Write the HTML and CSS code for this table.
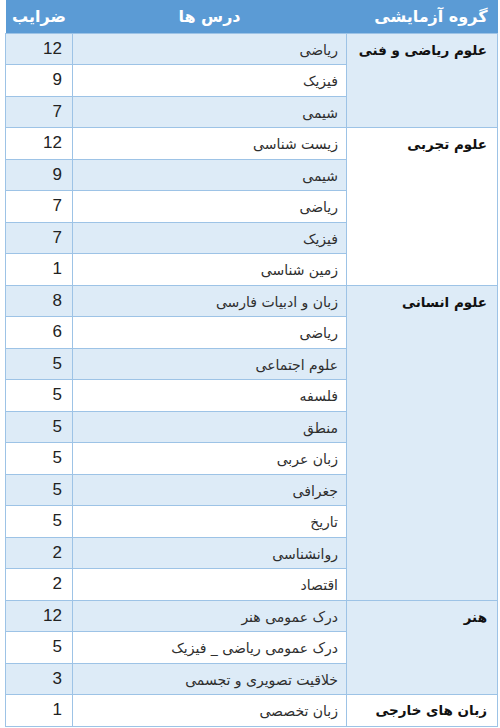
FILE: index.html
```html
<!DOCTYPE html>
<html lang="fa" dir="rtl">
<head>
<meta charset="utf-8">
<link rel="stylesheet" href="styles.css">
</head>
<body>
<table class="tbl">
  <colgroup><col class="c-group"><col class="c-lesson"><col class="c-num"></colgroup>
  <thead>
    <tr class="head"><th class="h-group">گروه آزمایشی</th><th class="h-lesson">درس ها</th><th class="h-num">ضرایب</th></tr>
  </thead>
  <tbody>
    <tr class="b"><td class="grp b" rowspan="3">علوم ریاضی و فنی</td><td class="les">ریاضی</td><td class="num">12</td></tr>
    <tr class="w"><td class="les">فیزیک</td><td class="num">9</td></tr>
    <tr class="b"><td class="les">شیمی</td><td class="num">7</td></tr>

    <tr class="w"><td class="grp w" rowspan="5">علوم تجربی</td><td class="les">زیست شناسی</td><td class="num">12</td></tr>
    <tr class="b"><td class="les">شیمی</td><td class="num">9</td></tr>
    <tr class="w"><td class="les">ریاضی</td><td class="num">7</td></tr>
    <tr class="b"><td class="les">فیزیک</td><td class="num">7</td></tr>
    <tr class="w"><td class="les">زمین شناسی</td><td class="num">1</td></tr>

    <tr class="b"><td class="grp b" rowspan="10">علوم انسانی</td><td class="les">زبان و ادبیات فارسی</td><td class="num">8</td></tr>
    <tr class="w"><td class="les">ریاضی</td><td class="num">6</td></tr>
    <tr class="b"><td class="les">علوم اجتماعی</td><td class="num">5</td></tr>
    <tr class="w"><td class="les">فلسفه</td><td class="num">5</td></tr>
    <tr class="b"><td class="les">منطق</td><td class="num">5</td></tr>
    <tr class="w"><td class="les">زبان عربی</td><td class="num">5</td></tr>
    <tr class="b"><td class="les">جغرافی</td><td class="num">5</td></tr>
    <tr class="w"><td class="les">تاریخ</td><td class="num">5</td></tr>
    <tr class="b"><td class="les">روانشناسی</td><td class="num">2</td></tr>
    <tr class="w"><td class="les">اقتصاد</td><td class="num">2</td></tr>

    <tr class="b"><td class="grp b" rowspan="3">هنر</td><td class="les">درک عمومی هنر</td><td class="num">12</td></tr>
    <tr class="w"><td class="les">درک عمومی ریاضی _ فیزیک</td><td class="num">5</td></tr>
    <tr class="b"><td class="les">خلاقیت تصویری و تجسمی</td><td class="num">3</td></tr>

    <tr class="w"><td class="grp w grp-mid">زبان های خارجی</td><td class="les">زبان تخصصی</td><td class="num">1</td></tr>
  </tbody>
</table>
</body>
</html>
```

FILE: styles.css
```css
html, body {
  margin: 0;
  padding: 0;
  background: #ffffff;
}
body {
  font-family: "DejaVu Sans", "Noto Sans", sans-serif;
  color: #1a1a1a;
}
.tbl {
  border-collapse: collapse;
  table-layout: fixed;
  width: 492px;
  margin: 0 2px 0 6px;
}
.c-group { width: 151px; }
.c-lesson { width: 274px; }
.c-num { width: 67px; }

.head { height: 33px; background: #5b9bd5; }
.head th {
  color: #ffffff;
  font-weight: bold;
  font-size: 16px;
  padding: 0;
  border: none;
}
.h-group { text-align: right; padding-right: 10px !important; }
.h-lesson, .h-num { text-align: center; }

tbody tr { height: 31.5px; }
tr.b { background: #ddebf7; }
tr.w { background: #ffffff; }
td {
  border: 1px solid #9dc3e6;
  padding: 0;
  vertical-align: middle;
}
td.b { background: #ddebf7; }
td.w { background: #ffffff; }
.grp {
  vertical-align: top;
  text-align: right;
  font-weight: bold;
  font-size: 13.5px;
  padding: 8px 10px 0 0;
  color: #111;
}
.grp-mid { vertical-align: middle; padding-top: 0; }
.les {
  text-align: right;
  font-size: 14px;
  padding: 2px 8px 0 0;
  color: #2e2e2e;
}
.num {
  direction: ltr;
  font-family: "Liberation Sans", "Open Sans", sans-serif;
  font-size: 17px;
  text-align: right;
  padding-right: 10px;
  color: #222;
}
```
